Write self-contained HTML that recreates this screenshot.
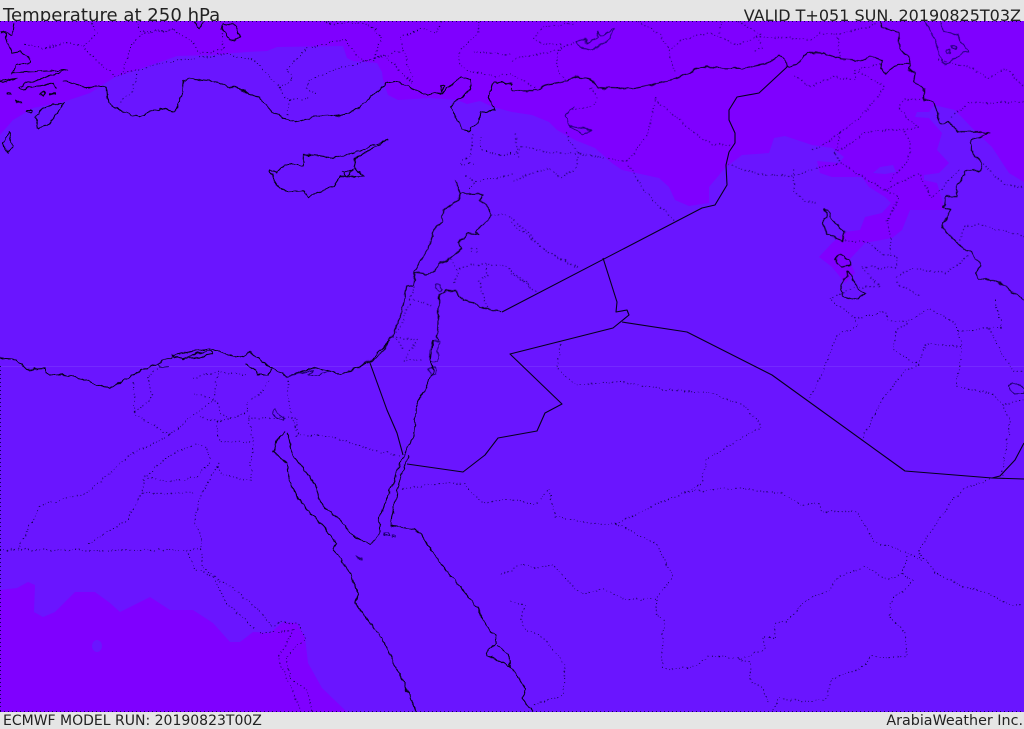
<!DOCTYPE html>
<html><head><meta charset="utf-8"><style>
html,body{margin:0;padding:0;width:1024px;height:729px;overflow:hidden;background:#e5e5e5}
svg{position:absolute;left:0;top:0}
.s{fill:none;stroke:#05001c;stroke-width:1.1;stroke-linejoin:round;vector-effect:non-scaling-stroke}
.i{fill:none;stroke:#1d0070;stroke-width:1;stroke-linejoin:round;vector-effect:non-scaling-stroke}
.d{fill:none;stroke:#0e0048;stroke-width:1.15;stroke-linecap:round;stroke-dasharray:0 3.6;vector-effect:non-scaling-stroke}
.e{fill:none;stroke:#12005a;stroke-width:1;stroke-dasharray:1 3}
.bar{position:absolute;left:0;width:1024px;background:#e5e5e5;overflow:hidden;font-family:"DejaVu Sans","Liberation Sans",sans-serif;color:#222}
.bar span{position:absolute;white-space:nowrap}
</style></head><body>
<svg width="1024" height="729" viewBox="0 0 1024 729">
<defs>
<filter id="w" filterUnits="userSpaceOnUse" x="0" y="0" width="1024" height="729" color-interpolation-filters="sRGB">
<feTurbulence type="fractalNoise" baseFrequency="0.13" numOctaves="2" seed="4" result="n"/>
<feDisplacementMap in="SourceGraphic" in2="n" scale="5" xChannelSelector="R" yChannelSelector="G"/>
</filter>
</defs>
<rect x="0" y="21" width="1024" height="691" fill="#6a15ff"/>
<path fill="#7f00ff" d="M0 21V135L13 120 33 108 63 102 90 93 115 77 143 68 177 56 213 55 247 52 267 51 277 47 343 46 347 58 353 61 377 63 382 72 383 80 388 95 398 100 430 98 457 100 467 104 480 101 493 107 512 112 532 115 549 122 557 130 575 140 595 148 612 163 622 170 659 178 669 187 675 200 689 206 709 203 709 187 725 168 742 155 769 153 774 138 785 136 812 145 832 148 844 157 839 163 817 161 820 173 832 177 862 177 869 187 885 197 891 203 882 213 865 217 860 230 845 232 832 243 819 257 832 267 845 283 855 273 849 260 865 243 892 238 902 230 910 210 945 210 937 183 924 180 924 175 939 173 949 163 937 150 942 133 929 118 915 117 917 112 929 112 934 105 955 110 974 130 992 147 1009 173 1024 182V21Z"/>
<path fill="#6a15ff" d="M873 173 880 167 893 165 896 172 885 174Z"/>
<path fill="#7f00ff" d="M0 712V590L17 588 28 582 35 585 34 612 43 617 55 612 75 592 95 592 110 603 120 612 150 597 170 610 193 610 213 623 230 642 240 642 253 632 270 633 283 622 297 623 305 637 308 663 322 688 347 712Z"/>
<ellipse cx="97" cy="646" rx="5" ry="6" fill="#6a15ff"/>
<rect x="0" y="366" width="1024" height="1" fill="#7429ff"/>
<path class="e" d="M0 21.5H1024M0 711.5H1024"/>
<path class="e" d="M.5 366V712"/>

<g filter="url(#w)">
<!-- zoom 1 group -->
<g transform="scale(.33333)">
<path class="s" d="M0 100 15 105 25 130 33 160 60 155 90 178 92 188 50 195 38 218 200 210 55 260 60 268 160 250 168 265"/>
<path class="s" d="M40 70 35 105 0 97"/>
<path class="s" d="M190 240 250 260 290 258 320 265 325 310 360 335 395 345 420 350 480 325 525 335 545 290 550 240 565 235 640 243 720 270 775 290 800 320 850 355 890 365 940 350 1020 345 1060 335 1080 320 1120 285 1160 250 1190 243 1230 262 1280 287 1330 275 1385 230 1410 240 1415 265 1350 320 1385 385 1410 395 1410 385 1435 370 1440 335 1485 330 1465 295 1480 242 1536 255"/>
<path class="s" d="M1165 420 1110 440 1060 460 1000 472 912 463 910 495 855 495 830 520 810 510 825 550 860 575 915 572 925 590 1000 560 1020 530 1060 530 1090 528 1060 500 1065 475Z"/>
<path class="s" d="M1025 515 1040 530 1060 508 1030 520"/>
<path class="s" d="M190 305 130 325 108 350 115 385 150 370 185 320Z"/>
<path class="s" d="M25 395 10 430 25 460 37 440Z"/>
<path class="s" d="M0 245 50 235 10 250ZM20 280h12v5h-12zM47 300 65 310 50 305ZM80 333h15v5h-15zM120 280 135 275 130 290ZM150 280h15v3h-15z"/>
<path class="s" d="M670 70 700 75 722 112 690 122 665 85Z"/>
<path class="s" d="M585 65 597 85 608 65"/>
<path class="s" d="M1320 260 1335 258 1325 272Z"/>
<path class="d" d="M75 132 130 145 200 128 250 140 290 100 275 70M250 140 300 190 340 225M370 215 395 130 430 100 520 90 570 120 600 160 670 150 665 100M410 225 395 275 355 310M345 230 430 205 530 180 590 175 680 160 760 180 820 240 840 265 850 290 870 300 930 295M870 300 860 350M840 265 880 235 860 210 920 145 1035 118 1090 185 1210 150 1200 115 1260 85 1310 100 1320 65M1090 185 1000 210 930 240 920 265 955 285M1090 185 1150 165 1240 250M1210 150 1240 250M980 70 1100 70 1145 105 1120 185M410 65 420 95 520 90M1435 65 1435 100 1380 150 1375 190 1400 210 1490 230 1536 215M1420 155 1536 165M1420 405 1415 460 1380 490 1420 490M1440 410 1445 450 1490 465 1536 460M1400 530 1430 545 1536 525M1410 565 1430 545"/>
</g>

<!-- zoom 2 group -->
<g transform="translate(512,0) scale(.33333)">
<path class="s" d="M0 262V270L65 272 100 255 150 245 190 230 235 240 260 263 340 268 430 252 490 235 570 200 640 205 690 205 770 188 800 167 820 178 825 200 855 195 885 158 935 160 990 178 1045 183 1075 167 1110 180 1105 205 1120 220 1160 190 1190 190"/>
<path class="s" d="M1105 65 1110 80 1160 100 1165 150 1195 175 1190 205 1210 215 1205 245 1235 265 1235 300 1265 305 1285 370 1310 368 1340 395 1400 395 1432 400 1380 420 1378 450 1405 490 1405 510 1360 515 1335 560 1335 590 1300 590 1295 625 1315 630 1290 680 1340 735 1375 755 1408 795 1390 820 1400 835 1440 840 1480 860 1536 900"/>
<path class="i" d="M195 125 220 115 222 130 260 110 258 95 272 110 305 85 295 115 240 150 205 142Z"/>
<path class="i" d="M185 320 158 350 170 375 215 385 240 390 210 402 175 378"/>
<path class="i" d="M1240 65 1270 120 1285 170 1300 195 1340 165 1370 155 1335 105 1295 95 1290 65"/>
<path class="i" d="M1305 150h10v12h-10zM1320 137h10v8h-10z"/>
<path class="s" d="M935 625 945 650 930 670 945 705 990 722 1000 695 970 670 945 630Z"/>
<path class="s" d="M985 765 968 778 990 800 1012 795 1010 780Z"/>
<path class="s" d="M1003 815 1005 830 985 855 992 888 1035 898 1060 880 1040 870 1020 830Z"/>
<path class="d" d="M65 115 90 85 180 70M65 115 85 130 150 135 135 160 135 210 160 240M0 180 135 150 195 125M0 225 75 265M240 265 255 295 235 320 180 330M380 65 440 100 470 150 490 220M470 150 520 115 600 100 680 135 735 110 750 140 725 155M735 110 900 118 920 100 975 105 1100 70M975 105 985 175M630 65 620 100M680 65 750 105M430 295 410 400 345 485 200 460 160 400M430 300 560 410 600 435 660 435M200 460 190 505 150 535 110 505 0 540M200 460 100 458 30 440 0 470M10 405 20 470M345 485 400 580 490 665M650 495 750 525 840 528 915 505 985 490 1120 570 1160 590 1125 660 1135 710 1135 770M845 510 845 570 880 605 920 610M905 450 930 435 985 400 1050 345 1120 260M985 400 970 460 985 490M970 460 1045 410 1060 395 1220 385 1180 350 1160 320 1175 300 1240 295M1180 395 1195 430 1190 480 1130 545M1120 570 1220 520 1260 595 1340 510M850 230 890 260 970 230 1030 240 1030 210 1120 260M1030 210 1110 190M1320 350 1370 310 1536 305M1280 180 1380 205 1430 235 1480 205 1536 260M1405 485 1480 555 1536 560M1345 720 1355 680 1400 672 1536 710M1000 720 1070 725 1115 765 1155 770 1155 800 1110 805 1050 800 1100 860M1155 830 1200 805 1300 820 1375 765M1155 850 1230 890M955 895 1030 860 1100 860M0 670 100 750 200 805M0 820 60 865"/>
</g>

<!-- zoom 5 group (levant) -->
<g transform="translate(360,180) scale(.33333)">
<path class="s" d="M285 0 300 40H350L370 45 355 60 385 80 392 105 375 130 345 155 358 162 320 160 295 190 305 205 270 240 235 250 225 275 200 282 165 277"/>
<path class="s" d="M300 40V55L250 90 245 125 222 152 205 205 165 275 160 315 140 318 125 400 95 470 60 525 0 560"/>
<path class="s" d="M237 345 262 330 290 335 310 362 340 368 380 388 425 395"/>
<path class="s" d="M237 345 232 480"/>
<path class="i" d="M228 312h15l5 15-8 8-10-8Z"/>
<path class="i" d="M220 482 238 482 232 545 212 545 208 520Z"/>
<path class="i" d="M205 565 225 562 230 580 212 585Z"/>
<path class="d" d="M395 105 435 102 490 145 560 215 650 265M275 240 295 280 280 315M300 265 375 250 440 260 530 335M355 300 385 285 375 250M355 300 382 385M335 205v15M350 205v15M165 320 150 360 170 360 220 380M150 360 125 435 95 470 175 480 130 540 185 540M100 470 130 505"/>
</g>

<!-- zoom 3 group -->
<g transform="translate(0,340) scale(.33333)">
<path class="s" d="M1170 0 1105 70 1020 100 990 95 940 83 860 110 800 75 750 37 730 50 690 45 630 25 520 45 515 50 470 70 400 105 330 145 310 143 250 115 140 100 135 85 80 90 50 60 0 55"/>
<path class="s" d="M735 70 760 85 775 105 805 105 815 85"/>
<path class="s" d="M515 42 525 50 545 55 630 30 635 40 600 50 545 58"/>
<path class="i" d="M860 110 940 90 925 105 960 105 990 95"/>
<path class="i" d="M470 70 485 82 505 78"/>
<path class="s" d="M1210 345 1180 430 1140 530 1140 580 1112 612 1060 590 1010 530 960 490 945 430 880 350 860 280"/>
<path class="s" d="M1300 0 1290 60 1300 95 1250 200 1240 290 1210 345"/>
<path class="s" d="M1225 345 1190 450 1170 560 1180 558 1255 570 1300 640 1345 700 1430 800 1470 875 1490 885 1485 910 1465 930 1460 945 1530 980 1525 945 1490 915"/>
<path class="s" d="M1530 981 1545 996 1578 1050 1566 1074 1599 1116"/>
<path class="s" d="M855 275 830 300 822 335 860 370 870 430 905 490 980 570 1010 610 1000 630 1045 690 1075 760 1065 785 1160 920 1250 1115"/>
<path class="i" d="M825 205 840 225 855 235 850 243 825 228 815 215Z"/>
<path class="i" d="M1065 650 1085 660 1070 655ZM1155 580h12v8h-12zM1175 585h12v6h-12z"/>
<path class="d" d="M0 630H605M55 625 120 495 260 460 390 345 510 285 595 215 640 180 655 100M510 285 405 225 400 120M405 215 460 170 440 110 480 80M600 230 650 245 740 220 745 185 790 150 805 120M580 115 650 95 745 105M585 160 650 185 660 220 700 240M650 245 660 305 755 305M745 230 760 300 750 425 660 400 650 375M745 235 890 230 895 285 870 210 860 115M890 285 1000 290 1100 325 1205 350M435 410 510 425 590 410 630 370 620 320 590 312 510 345ZM435 410 425 460 590 460M425 460 380 540 260 615M655 370 600 470 585 540 605 600 605 680 660 720 700 745 790 825 815 860M560 635 590 690 640 710 680 790 765 865M815 860 850 845 900 855 915 895 860 950 870 1015 920 1050 940 1115M880 870 835 955 905 1115M780 880 880 870M1210 445 1340 428 1390 432 1450 490 1536 475M1505 700 1536 690"/>
</g>

<!-- zoom 4 group -->
<g transform="translate(512,300) scale(.33333)">
<path class="i" d="M1490 255 1515 250 1536 265 1536 280 1500 282Z"/>
<path class="d" d="M145 135 135 205 190 255 320 245 460 270 600 280 700 320 750 380 580 480 570 550 520 575 310 670 265 675 130 650 110 565 75 610 0 600M520 575 670 565 810 580 870 615 920 610 930 635 1035 635 1085 725 1190 760 1230 780 1220 750 1320 600 1360 565 1440 535M310 670 430 730 485 830 430 895 340 900 270 865 210 885 120 795 70 805 30 795 0 805M435 900 430 945 455 960 450 1100 475 1110 560 1095 590 1068 680 1075 755 1050 755 1010 790 1015 790 970 825 965 870 910 950 870 980 830 1060 800 1130 840 1170 820 1190 765M1170 820 1205 845 1135 905 1135 950 1180 1000 1185 1070 1080 1070 1040 1110 960 1135 940 1200 880 1205 800 1195 780 1235M680 1075 715 1090 715 1145 750 1160 770 1215M1230 765 1270 820 1350 860 1430 880 1480 910 1536 915M895 295 935 210 970 110 1040 75 1030 55 960 0M1030 55 1120 35 1130 60 1190 65 1250 25 1330 70 1350 140 1335 260 1440 280 1470 315 1495 365 1470 525M1050 420 1110 300 1180 210 1220 195 1240 130 1350 140M1220 195 1145 150 1155 90 1190 65M1340 95 1430 85 1470 85 1450 0M1430 85 1500 210 1536 215M1470 315 1536 300M0 905 40 915 25 960 45 990 90 1010 125 1050 155 1090 155 1185 60 1215"/>
</g>
</g>

<!-- straight borders, unfiltered -->
<g fill="none" stroke="#05001c" stroke-width="1.1" stroke-linejoin="round">
<path d="M787 67 759 93 737 97 729 110 729 120 735 133 735 143 729 152 726 165 727 185 715 205 702 208 502 312"/>
<path d="M603 258 617 302 616 312 627 310 629 315 613 328 510 354 562 404 545 413 537 431 498 438 485 455 463 472 407 464"/>
<path d="M622 322 687 332 772 375 905 471 992 478 1024 479"/>
<path d="M992 478 1000 476 1015 460 1024 443"/>
<path d="M370 363 387 410 397 433 403 455"/>
</g>
</svg>
<div class="bar" style="top:0;height:21px">
<span style="left:3px;top:6px;font-size:18.1px;line-height:20px">Temperature at 250 hPa</span>
<span style="right:3px;top:6px;font-size:16px;line-height:20px">VALID T+051 SUN. 20190825T03Z</span>
</div>
<div class="bar" style="top:712px;height:17px">
<span style="left:3px;top:1px;font-size:14px;line-height:17px">ECMWF MODEL RUN: 20190823T00Z</span>
<span style="right:1px;top:1px;font-size:14.3px;line-height:17px">ArabiaWeather Inc.</span>
</div>
</body></html>
